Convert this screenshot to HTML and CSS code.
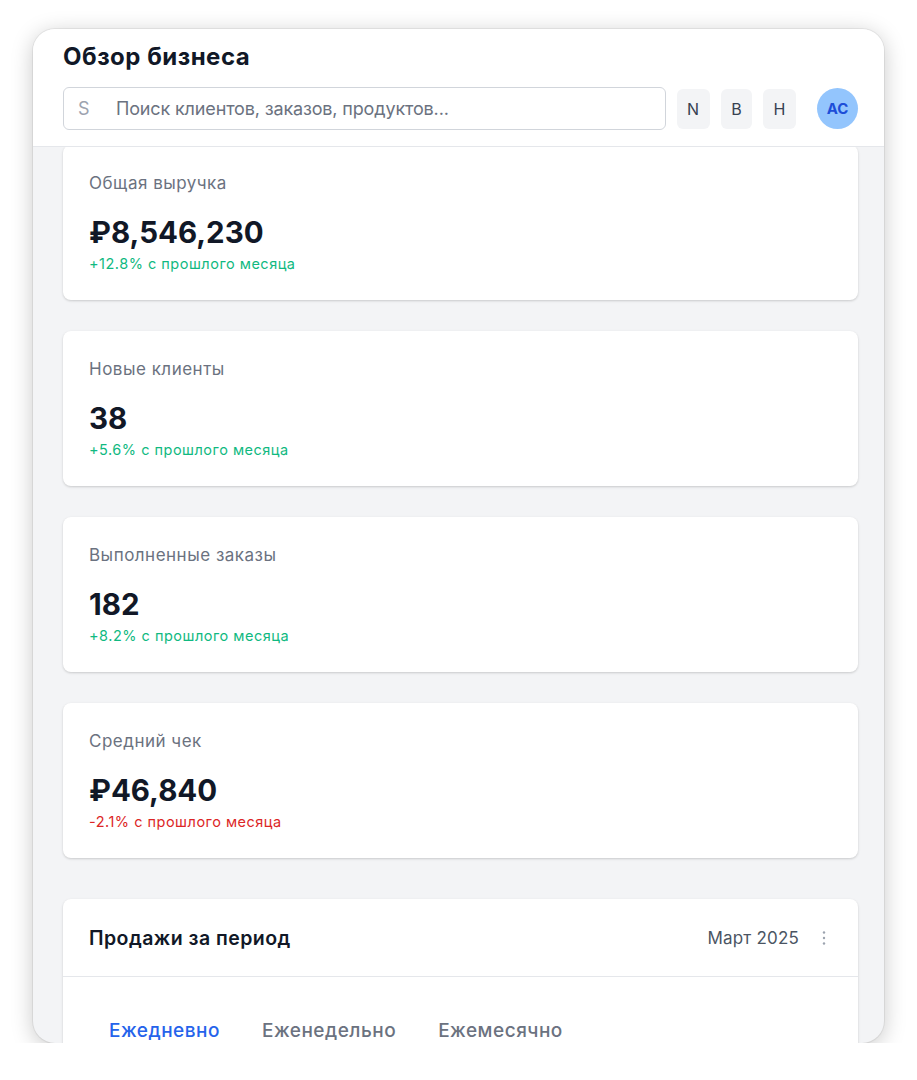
FILE: index.html
```html
<!DOCTYPE html>
<html lang="ru">
  <head>
    <meta charset="UTF-8" />
    <meta name="viewport" content="width=device-width, initial-scale=1.0" />
    <title>Обзор бизнеса</title>
    <link rel="stylesheet" href="styles.css">
  </head>
  <body>
    <div class="stage">
      <div class="device">
        <!--Top bar with search and quick actions-->
        <header class="topbar">
          <h1 class="page-title">Обзор бизнеса</h1>
          <div class="toolbar">
            <label class="search">
              <span class="search-icon">S</span>
              <input type="text" placeholder="Поиск клиентов, заказов, продуктов..." />
            </label>
            <button class="tool-btn">N</button>
            <button class="tool-btn">B</button>
            <button class="tool-btn">H</button>
            <div class="avatar">AC</div>
          </div>
        </header>

        <main class="content">
          <section class="stats">
            <div class="stat-card">
              <div class="stat-label">Общая выручка</div>
              <div class="stat-value">₽8,546,230</div>
              <div class="stat-change up">+12.8% с прошлого месяца</div>
            </div>
            <div class="stat-card">
              <div class="stat-label">Новые клиенты</div>
              <div class="stat-value">38</div>
              <div class="stat-change up">+5.6% с прошлого месяца</div>
            </div>
            <div class="stat-card">
              <div class="stat-label">Выполненные заказы</div>
              <div class="stat-value">182</div>
              <div class="stat-change up">+8.2% с прошлого месяца</div>
            </div>
            <div class="stat-card">
              <div class="stat-label">Средний чек</div>
              <div class="stat-value">₽46,840</div>
              <div class="stat-change down">-2.1% с прошлого месяца</div>
            </div>
          </section>

          <!--Sales chart panel-->
          <section class="panel">
            <div class="panel-head">
              <h2 class="panel-title">Продажи за период</h2>
              <div class="panel-meta">
                <span>Март 2025</span>
                <button class="more-btn" aria-label="Ещё">
                  <svg width="16" height="16" viewBox="0 0 16 16">
                    <circle cx="8" cy="2.5" r="1.2" fill="#9ca3af" />
                    <circle cx="8" cy="8" r="1.2" fill="#9ca3af" />
                    <circle cx="8" cy="13.5" r="1.2" fill="#9ca3af" />
                  </svg>
                </button>
              </div>
            </div>
            <div class="tabs">
              <button class="tab active">Ежедневно</button>
              <button class="tab">Еженедельно</button>
              <button class="tab">Ежемесячно</button>
            </div>
          </section>
        </main>
      </div>
    </div>
  </body>
</html>
```

FILE: styles.css
```css
body {
  margin: 0;
  background: #fff;
  font-family: Inter, "Noto Sans", sans-serif;
  color: #111827;
}
.stage {
  padding: 29px 33px 0 33px;
}
/* Window frame */
.device {
  height: 1014px;
  border-radius: 22px;
  overflow: hidden;
  background: #f3f4f6;
  box-shadow: 0 0 0 1px rgba(0, 0, 0, 0.06), 0 4px 22px rgba(0, 0, 0, 0.22);
  display: flex;
  flex-direction: column;
}
/* Top bar */
.topbar {
  position: relative;
  z-index: 2;
  background: #fff;
  border-bottom: 1px solid #e5e7eb;
  padding: 12px 26px 16px 30px;
}
.page-title {
  margin: 0 0 14px;
  font-size: 24px;
  line-height: 32px;
  font-weight: 700;
  letter-spacing: 0.5px;
  color: #111827;
}
.toolbar {
  display: flex;
  align-items: center;
  gap: 11px;
}
.search {
  flex: 1;
  height: 43px;
  box-sizing: border-box;
  display: flex;
  align-items: center;
  border: 1px solid #d1d5db;
  border-radius: 6px;
  padding: 0 14px;
}
.search-icon {
  font-size: 18px;
  color: #9ca3af;
  width: 38px;
}
.search input {
  flex: 1;
  border: none;
  outline: none;
  font-family: inherit;
  font-size: 18px;
  letter-spacing: -0.15px;
  color: #111827;
  padding: 0;
}
.search input::placeholder {
  color: #6b7280;
}
.tool-btn {
  height: 40px;
  padding: 0 10.5px;
  border: none;
  border-radius: 6px;
  background: #f3f4f6;
  font-family: inherit;
  font-size: 16px;
  color: #374151;
}
.avatar {
  width: 41px;
  height: 41px;
  margin-left: 10px;
  border-radius: 50%;
  background: #93c5fd;
  color: #1d4ed8;
  font-size: 15px;
  font-weight: 700;
  display: flex;
  align-items: center;
  justify-content: center;
}
.content {
  padding: 0 26px 0 30px;
  display: flex;
  flex-direction: column;
  gap: 41px;
}
.stats {
  margin-top: -2px;
  display: grid;
  gap: 31px;
}
.stat-card {
  height: 155px;
  box-sizing: border-box;
  padding: 26px 26px;
  background: #fff;
  border-radius: 8px;
  box-shadow: 0 1px 3px rgba(0, 0, 0, 0.12), 0 1px 2px rgba(0, 0, 0, 0.06);
}
.stat-label {
  font-size: 17px;
  line-height: 24px;
  letter-spacing: 0.5px;
  color: #6b7280;
  margin-bottom: 18px;
}
.stat-value {
  font-size: 29.5px;
  line-height: 38px;
  font-weight: 700;
  color: #111827;
  margin-bottom: 3px;
}
.stat-change {
  font-size: 14.5px;
  line-height: 20px;
  letter-spacing: 0.5px;
}
.stat-change.up {
  color: #10b981;
}
.stat-change.down {
  color: #dc2626;
}
/* Sales panel */
.panel {
  background: #fff;
  border-radius: 8px;
  box-shadow: 0 1px 3px rgba(0, 0, 0, 0.12), 0 1px 2px rgba(0, 0, 0, 0.06);
}
.panel-head {
  height: 78px;
  box-sizing: border-box;
  padding: 0 26px;
  border-bottom: 1px solid #e5e7eb;
  display: flex;
  align-items: center;
  justify-content: space-between;
}
.panel-title {
  margin: 0;
  font-size: 19.5px;
  letter-spacing: 0.45px;
  font-weight: 600;
  color: #111827;
}
.panel-meta {
  display: flex;
  align-items: center;
  gap: 17px;
  font-size: 17px;
  letter-spacing: 0.2px;
  color: #4b5563;
}
.more-btn {
  border: none;
  background: none;
  padding: 0;
  display: flex;
}
.tabs {
  display: flex;
  padding: 42px 25px 20px;
}
.tab {
  border: none;
  background: none;
  padding: 0 21px;
  font-family: inherit;
  font-size: 19px;
  font-weight: 500;
  letter-spacing: 0.5px;
  color: #6b7280;
}
.tab.active {
  color: #2563eb;
}
```
